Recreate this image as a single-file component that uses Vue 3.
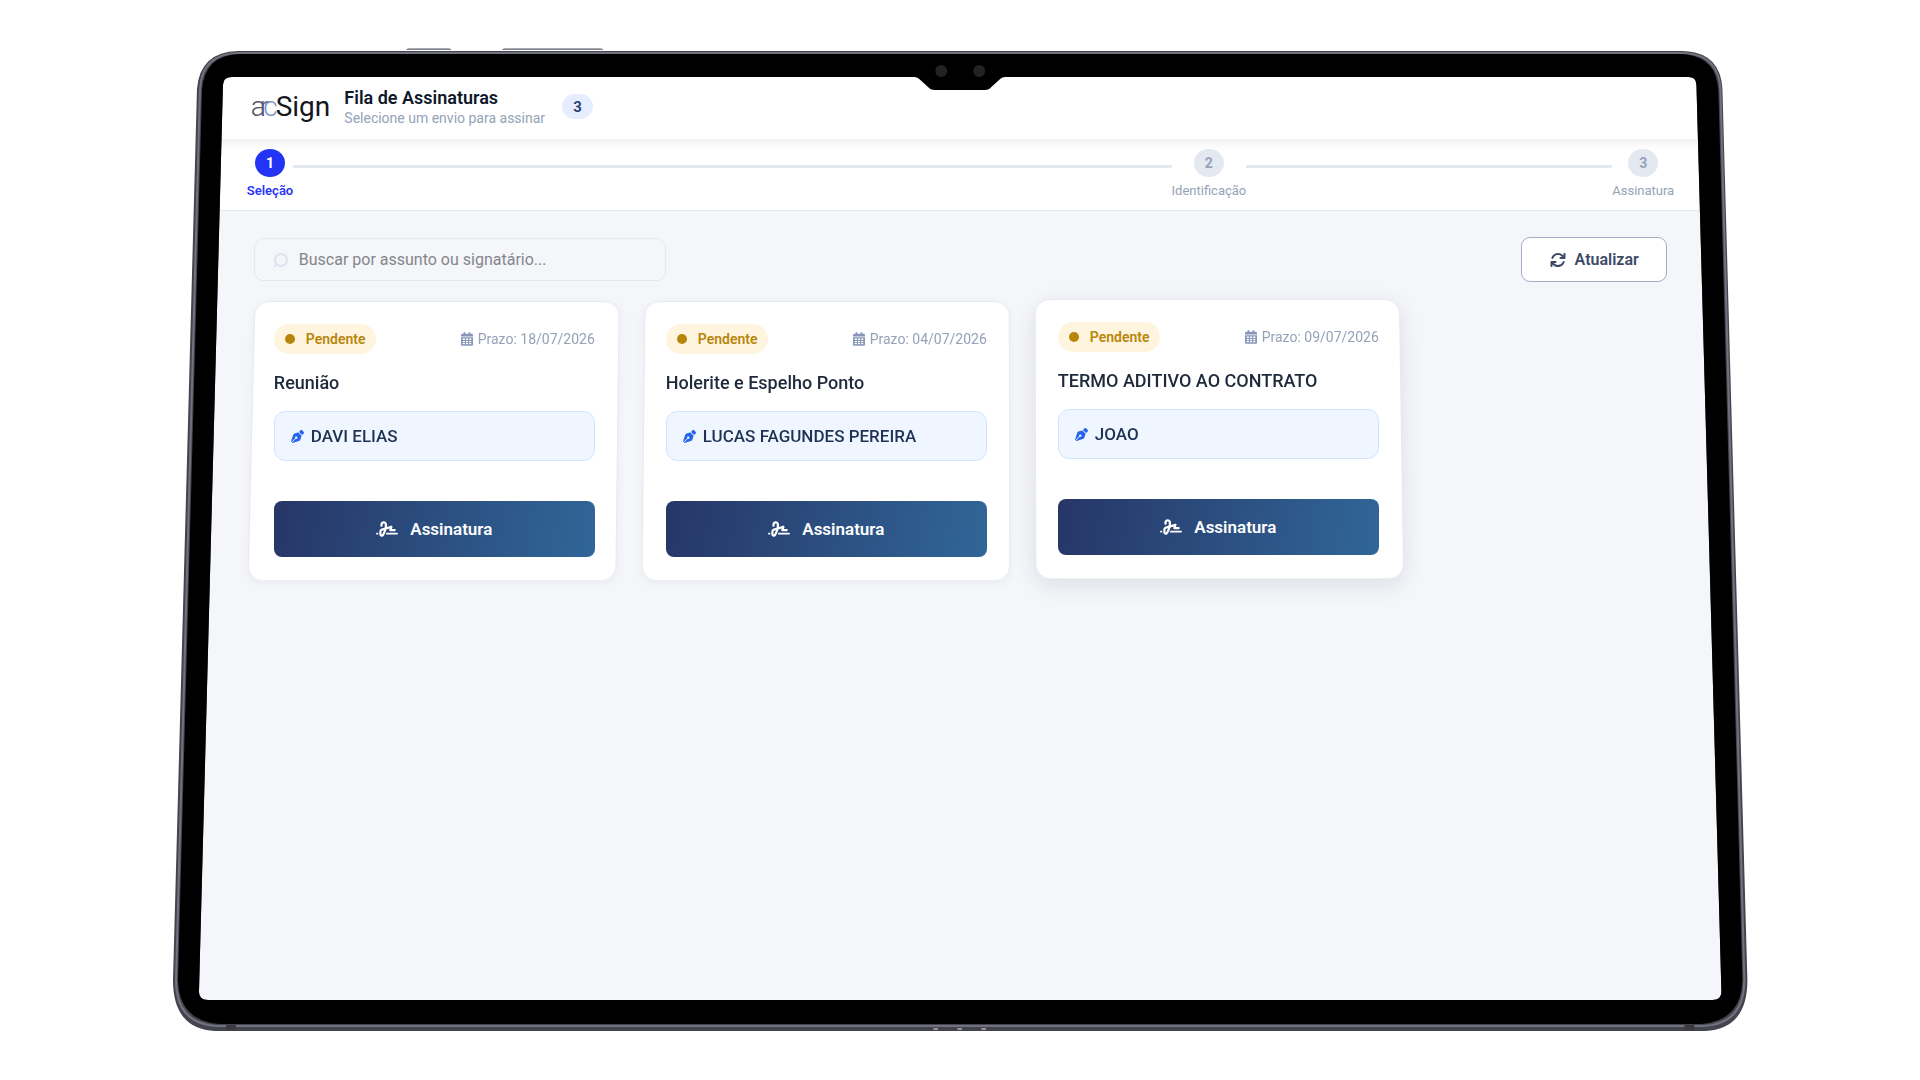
<script setup>
import { ref, computed } from 'vue'

const search = ref('')

const steps = [
    { number: 1, label: 'Seleção', active: true },
    { number: 2, label: 'Identificação', active: false },
    { number: 3, label: 'Assinatura', active: false }
]

const envios = ref([
    { id: 1, assunto: 'Reunião', signatario: 'DAVI ELIAS', prazo: '18/07/2026', tilt: 'tilt-left' },
    { id: 2, assunto: 'Holerite e Espelho Ponto', signatario: 'LUCAS FAGUNDES PEREIRA', prazo: '04/07/2026', tilt: 'tilt-center' },
    { id: 3, assunto: 'TERMO ADITIVO AO CONTRATO', signatario: 'JOAO', prazo: '09/07/2026', tilt: 'tilt-right' }
])

const filtered = computed(() => {
    const term = search.value.trim().toLowerCase()
    if (!term) return envios.value
    return envios.value.filter(
        (e) => e.assunto.toLowerCase().includes(term) || e.signatario.toLowerCase().includes(term)
    )
})

function refresh() {
    search.value = ''
}
</script>

<template>
    <div class="stage">
        <div class="device">
            <div class="screen">
                <!-- Header -->
                <header class="app-header">
                    <div class="logo"><span class="logo-a">a</span><span class="logo-r">r</span><span class="logo-c">c</span><span class="logo-sign">Sign</span></div>
                    <div class="heading">
                        <h1 class="title">Fila de Assinaturas</h1>
                        <p class="subtitle">Selecione um envio para assinar</p>
                    </div>
                    <span class="count">{{ envios.length }}</span>
                </header>

                <!-- Steps -->
                <nav class="stepper">
                    <template v-for="step in steps" :key="step.number">
                        <span v-if="step.number > 1" class="step-line" :class="'line-' + step.number"></span>
                        <div class="step" :class="{ active: step.active }">
                            <span class="step-circle">{{ step.number }}</span>
                            <span class="step-label">{{ step.label }}</span>
                        </div>
                    </template>
                </nav>

                <main class="content">
                    <!-- Toolbar -->
                    <div class="toolbar">
                        <label class="search">
                            <svg class="search-icon" viewBox="0 0 16 16" aria-hidden="true">
                                <circle cx="9" cy="8" r="6" />
                                <path d="M5 12L2 15" />
                            </svg>
                            <input
                                v-model="search"
                                type="text"
                                class="search-input"
                                aria-label="Buscar"
                                placeholder="Buscar por assunto ou signatário..."
                            />
                        </label>
                        <button type="button" class="btn-refresh" @click="refresh">
                            <svg class="refresh-icon" viewBox="0 0 512 512" aria-hidden="true">
                                <path d="M105.1 202.6c7.7-21.8 20.2-42.3 37.8-59.8c62.5-62.5 163.8-62.5 226.3 0L386.3 160H336c-17.7 0-32 14.3-32 32s14.3 32 32 32H463.5c17.7 0 32-14.3 32-32V64c0-17.7-14.3-32-32-32s-32 14.3-32 32v51.2L414.4 97.6c-87.5-87.5-229.3-87.5-316.8 0C73.2 122 55.6 150.7 44.8 181.4c-5.9 16.7 2.9 34.9 19.5 40.8s34.9-2.9 40.8-19.5zM39 289.3c-5 1.5-9.8 4.2-13.7 8.2c-4 4-6.7 8.8-8.1 14C16.4 314 16 317 16 320V448c0 17.7 14.3 32 32 32s32-14.3 32-32V396.9l17.6 17.5c87.5 87.4 229.3 87.4 316.7 0c24.4-24.4 42.1-53.1 52.9-83.7c5.9-16.7-2.9-34.9-19.5-40.8s-34.9 2.9-40.8 19.5c-7.7 21.8-20.2 42.3-37.8 59.8c-62.5 62.5-163.8 62.5-226.3 0L125.6 352H176c17.7 0 32-14.3 32-32s-14.3-32-32-32H48c-3 0-6 .4-9 1.3z" />
                            </svg>
                            Atualizar
                        </button>
                    </div>

                    <!-- Cards -->
                    <div class="cards">
                        <article v-for="envio in filtered" :key="envio.id" class="card" :class="envio.tilt">
                            <div class="card-top">
                                <span class="status"><i class="dot"></i>Pendente</span>
                                <span class="deadline">
                                    <svg class="calendar-icon" viewBox="0 0 448 512" aria-hidden="true">
                                        <path fill-rule="evenodd" d="M0 464c0 26.500 21.500 48 48 48h352c26.500 0 48-21.500 48-48V192H0v272zM64 240h80v56H64v-56zm120 0h80v56h-80v-56zm120 0h80v56h-80v-56zM64 328h80v48H64v-48zm120 0h80v48h-80v-48zm120 0h80v48h-80v-48zM64 408h80v48H64v-48zm120 0h80v48h-80v-48zm120 0h80v48h-80v-48zM400 64h-48V16c0-9-7-16-16-16h-32c-9 0-16 7-16 16v48H160V16c0-9-7-16-16-16h-32c-9 0-16 7-16 16v48H48C21.500 64 0 85.500 0 112v48h448v-48c0-26.500-21.500-48-48-48z" />
                                    </svg>
                                    Prazo: {{ envio.prazo }}
                                </span>
                            </div>
                            <h2 class="card-title">{{ envio.assunto }}</h2>
                            <div class="signer">
                                <svg class="pen-icon" viewBox="0 0 512 512" aria-hidden="true">
                                    <path d="M368.4 18.3L312.7 74.1 437.9 199.3l55.7-55.7c21.9-21.9 21.9-57.3 0-79.2L447.6 18.3c-21.9-21.9-57.3-21.9-79.2 0zM288 94.6l-9.2 2.8L134.7 140.6c-19.9 6-35.7 21.2-42.3 41L3.8 445.8c-3.8 11.3-1 23.9 7.3 32.4L164.7 324.7c-3-6.3-4.7-13.3-4.7-20.7c0-26.5 21.5-48 48-48s48 21.5 48 48s-21.5 48-48 48c-7.4 0-14.4-1.7-20.7-4.7L33.7 500.9c8.6 8.3 21.1 11.2 32.4 7.3l264.3-88.6c19.7-6.6 35-22.4 41-42.3l43.2-144.1 2.8-9.2L288 94.6z" />
                                </svg>
                                {{ envio.signatario }}
                            </div>
                            <button type="button" class="btn-sign">
                                <svg class="signature-icon" viewBox="0 0 640 512" aria-hidden="true">
                                    <path d="M192 128c0-17.7 14.3-32 32-32s32 14.3 32 32v7.8c0 27.7-2.4 55.3-7.1 82.5l-84.4 25.3c-40.6 12.2-68.4 49.6-68.4 92v71.9c0 40 32.5 72.5 72.5 72.5c26 0 50-13.9 62.9-36.5l13.9-24.3c26.8-47 46.5-97.7 58.4-150.5l94.4-28.3-12.5 37.5c-3.3 9.8-1.6 20.5 4.4 28.8s15.7 13.3 26 13.3H544c17.7 0 32-14.3 32-32s-14.3-32-32-32H460.4l18-53.9c3.8-11.3 .9-23.8-7.4-32.4s-20.7-11.8-32.2-8.4L316.4 198.1c2.4-20.7 3.6-41.4 3.6-62.3V128c0-53-43-96-96-96s-96 43-96 96v32c0 17.7 14.3 32 32 32s32-14.3 32-32V128zm-9.2 177l49-14.7c-10.4 33.8-24.5 66.4-42.1 97.2l-13.9 24.3c-1.5 2.6-4.3 4.3-7.4 4.3c-4.7 0-8.5-3.8-8.5-8.5V335.6c0-14.1 9.3-26.6 22.8-30.7zM24 368c-13.3 0-24 10.7-24 24s10.7 24 24 24H64.3c-.2-2.8-.3-5.6-.3-8.5V368H24zm592 48c13.3 0 24-10.7 24-24s-10.7-24-24-24H305.9c-6.7 16.3-14.2 32.3-22.3 48H616z" />
                                </svg>
                                Assinatura
                            </button>
                        </article>
                    </div>
                </main>
            </div>

            <!-- Tablet frame, open in the middle where the screen shows -->
            <svg class="frame" viewBox="0 0 1576 980" preserveAspectRatio="none" aria-hidden="true">
                <g class="side-buttons">
                    <path d="M234 1V-1Q234 -2 236 -2H276Q278 -2 278 -1V1Z" />
                    <path d="M330 1V-1Q330 -2 332 -2H428Q430 -2 430 -1V1Z" />
                </g>
                <path class="outside" fill-rule="evenodd" d="M-10 -1H1586V990H-10ZM65 0Q27 1 25 38L0 930Q0 979 42 981H1534Q1576 979 1576 930L1551 38Q1549 1 1511 0Z" />
                <path class="metal" fill-rule="evenodd" d="M65 0Q27 1 24 38L0 930Q0 979 42 981H1534Q1576 979 1576 930L1551 38Q1549 1 1511 0ZM59 26H1517Q1525 26 1525 34L1550 942Q1550 950 1541 950H35Q26 950 26 942L50 34Q50 26 59 26Z" />
                <path class="rim" d="M65 2Q29 3 27 38L3 930Q3 974 44 976H1532Q1573 974 1573 930L1549 38Q1547 3 1511 2Z" />
                <path class="bezel" fill-rule="evenodd" d="M67 3Q31 4 29 40L5 930Q6 971 46 974H1530Q1570 971 1571 930L1547 40Q1545 4 1509 3ZM59 26H742Q745 26 747 28L758 38Q760 39 763 39H812Q815 39 817 38L828 28Q830 26 833 26H1517Q1525 26 1525 34L1550 942Q1550 950 1541 950H35Q26 950 26 942L50 34Q50 26 59 26Z" />
                <circle class="camera" cx="769" cy="20" r="6" />
                <circle class="camera" cx="807" cy="20" r="6" />
                <g class="antenna">
                    <rect x="53" y="975" width="10" height="5" />
                    <rect x="1513" y="975" width="10" height="5" />
                </g>
                <g class="pins">
                    <rect x="761" y="978" width="5" height="2" rx="1" />
                    <rect x="785" y="978" width="5" height="2" rx="1" />
                    <rect x="809" y="978" width="5" height="2" rx="1" />
                </g>
            </svg>
        </div>
    </div>
</template>

<style>
body {
    background: #fff;
}
</style>

<style scoped>
.stage {
    box-sizing: border-box;
    min-height: 100vh;
    padding-top: 51px;
    overflow: hidden;
    font-family: Roboto, "Liberation Sans", sans-serif;
    color: #1e293b;
}

.stage *,
.stage *::before {
    box-sizing: border-box;
}

.device {
    position: relative;
    display: flex;
    width: 82%;
    aspect-ratio: 1576 / 980;
    margin: 0 auto;
    padding: 26px 26px 29px;
}

.frame {
    position: absolute;
    inset: 0;
    width: 100%;
    height: 100%;
    overflow: visible;
    pointer-events: none;
}

.outside {
    fill: #fff;
}

.side-buttons {
    fill: #a9adbd;
    stroke: #50525e;
    stroke-width: 1;
}

.metal {
    fill: #43444e;
}

.rim {
    fill: none;
    stroke: #72727e;
    stroke-width: 2;
}

.bezel {
    fill: #000;
}

.camera {
    fill: #232324;
}

.antenna {
    fill: #3a3a40;
}

.pins {
    fill: #9a9698;
}

.screen {
    flex: 1;
    min-width: 0;
    display: flex;
    flex-direction: column;
    background: #f4f6fa;
}

/* Header */
.app-header {
    position: relative;
    display: flex;
    align-items: center;
    height: 62px;
    padding: 0 52px 3px;
    background: #fff;
    box-shadow: 0 1px 12px rgba(15, 23, 42, 0.1);
}

.logo {
    display: flex;
    margin-right: 14px;
    font-size: 28px;
    line-height: 32px;
    font-weight: 300;
    color: #15171c;
}

.logo-a {
    color: #55555e;
}

.logo-r {
    margin-left: -6px;
    color: #4f5d7c;
}

.logo-c {
    margin-left: -6px;
    color: #7f97c4;
}

.logo-sign {
    margin-left: -2px;
    font-weight: 400;
}

.title {
    margin: 0;
    font-size: 18px;
    line-height: 22px;
    font-weight: 600;
    color: #0f172a;
}

.subtitle {
    margin: 0;
    font-size: 14px;
    line-height: 18px;
    color: #94a3b8;
}

.count {
    display: flex;
    align-items: center;
    justify-content: center;
    width: 31px;
    height: 25px;
    margin-left: 17px;
    border-radius: 13px;
    background: #e6edff;
    color: #1e3a6e;
    font-size: 15px;
    font-weight: 600;
}

/* Steps */
.stepper {
    display: flex;
    height: 72px;
    padding: 10px 47px 0 48px;
    background: #fff;
    border-bottom: 1px solid #e2e8f0;
}

.step {
    display: flex;
    flex-direction: column;
    align-items: center;
    gap: 6px;
    color: #94a3b8;
}

.step-circle {
    display: flex;
    align-items: center;
    justify-content: center;
    width: 30px;
    height: 28px;
    border-radius: 50%;
    background: #e4e8f0;
    font-size: 14px;
    font-weight: 700;
}

.step-label {
    font-size: 13px;
    line-height: 16px;
}

.step.active {
    color: #2a36f5;
}

.step.active .step-circle {
    background: #2434f5;
    color: #fff;
}

.step.active .step-label {
    font-weight: 600;
}

.step-line {
    height: 3px;
    margin-top: 16px;
    background: #e4e8f0;
}

.line-2 {
    flex: 12;
}

.line-3 {
    flex: 5;
}

/* Toolbar */
.content {
    padding: 26px 52px;
}

.toolbar {
    display: flex;
    align-items: center;
    justify-content: space-between;
    padding: 0 2px 0 3px;
}

.search {
    display: flex;
    align-items: center;
    gap: 11px;
    width: 412px;
    height: 43px;
    padding: 0 17px;
    border: 1px solid #e4e8f1;
    border-radius: 9px;
}

.search-icon {
    width: 16px;
    height: 16px;
    fill: none;
    stroke: #dde2ec;
    stroke-width: 2;
}

.search-input {
    flex: 1;
    min-width: 0;
    padding: 0;
    border: none;
    outline: none;
    background: transparent;
    font-family: inherit;
    font-size: 16px;
    color: #1e293b;
}

.search-input::placeholder {
    color: #84868c;
}

.btn-refresh {
    display: flex;
    align-items: center;
    justify-content: center;
    gap: 9px;
    width: 146px;
    height: 45px;
    padding: 0;
    border: 1px solid #a3aec6;
    border-radius: 9px;
    background: #fff;
    color: #3c4a66;
    font-family: inherit;
    font-size: 16px;
    font-weight: 600;
    cursor: pointer;
}

.refresh-icon {
    width: 16px;
    height: 16px;
    fill: currentColor;
}

/* Cards */
.cards {
    display: grid;
    grid-template-columns: repeat(auto-fill, 367px);
    gap: 25px;
    margin-top: 18px;
}

.card {
    position: relative;
    display: flex;
    flex-direction: column;
    height: 281px;
    padding: 24px 23px;
}

/* the sheet leans with the tablet, the text on it stays upright */
.card::before {
    content: "";
    position: absolute;
    inset: 0;
    border: 1px solid #e6e9f2;
    border-radius: 15px;
    background: #fff;
    box-shadow: 0 2px 10px rgba(15, 23, 42, 0.05);
    transform: perspective(2000px) rotateX(4deg);
}

.card > * {
    position: relative;
}

.tilt-left::before {
    transform-origin: 710px 50%;
}

.tilt-center::before {
    transform-origin: 318px 50%;
}

.tilt-right {
    top: -2px;
}

.tilt-right::before {
    transform-origin: -74px 50%;
    box-shadow: 0 6px 22px rgba(15, 23, 42, 0.1);
}

.card-top {
    display: flex;
    align-items: center;
    justify-content: space-between;
}

.status {
    display: flex;
    align-items: center;
    gap: 11px;
    height: 30px;
    padding: 0 10px 0 11px;
    border-radius: 15px;
    background: #fff5df;
    color: #b8860b;
    font-size: 14px;
    font-weight: 600;
}

.dot {
    width: 10px;
    height: 10px;
    border-radius: 50%;
    background: #b8860b;
}

.deadline {
    display: flex;
    align-items: center;
    gap: 5px;
    font-size: 14px;
    color: #94a3b8;
}

.calendar-icon {
    width: 12px;
    height: 14px;
    fill: #8795b8;
}

.card-title {
    margin: 17px 0 0;
    font-size: 18px;
    line-height: 24px;
    font-weight: 500;
    color: #1e293b;
}

.signer {
    display: flex;
    align-items: center;
    gap: 7px;
    height: 50px;
    margin-top: 16px;
    padding: 0 16px;
    border: 1px solid #cfe4fd;
    border-radius: 11px;
    background: #eff6ff;
    color: #1e3354;
    font-size: 17px;
    font-weight: 500;
}

.pen-icon {
    width: 13px;
    height: 13px;
    fill: #2563eb;
}

.btn-sign {
    display: flex;
    align-items: center;
    justify-content: center;
    gap: 12px;
    height: 56px;
    margin-top: 40px;
    padding: 0;
    border: none;
    border-radius: 8px;
    background: linear-gradient(100deg, #263667 0%, #316698 100%);
    color: #fff;
    font-family: inherit;
    font-size: 17px;
    font-weight: 600;
    cursor: pointer;
}

.signature-icon {
    width: 22px;
    height: 18px;
    fill: currentColor;
}
</style>
